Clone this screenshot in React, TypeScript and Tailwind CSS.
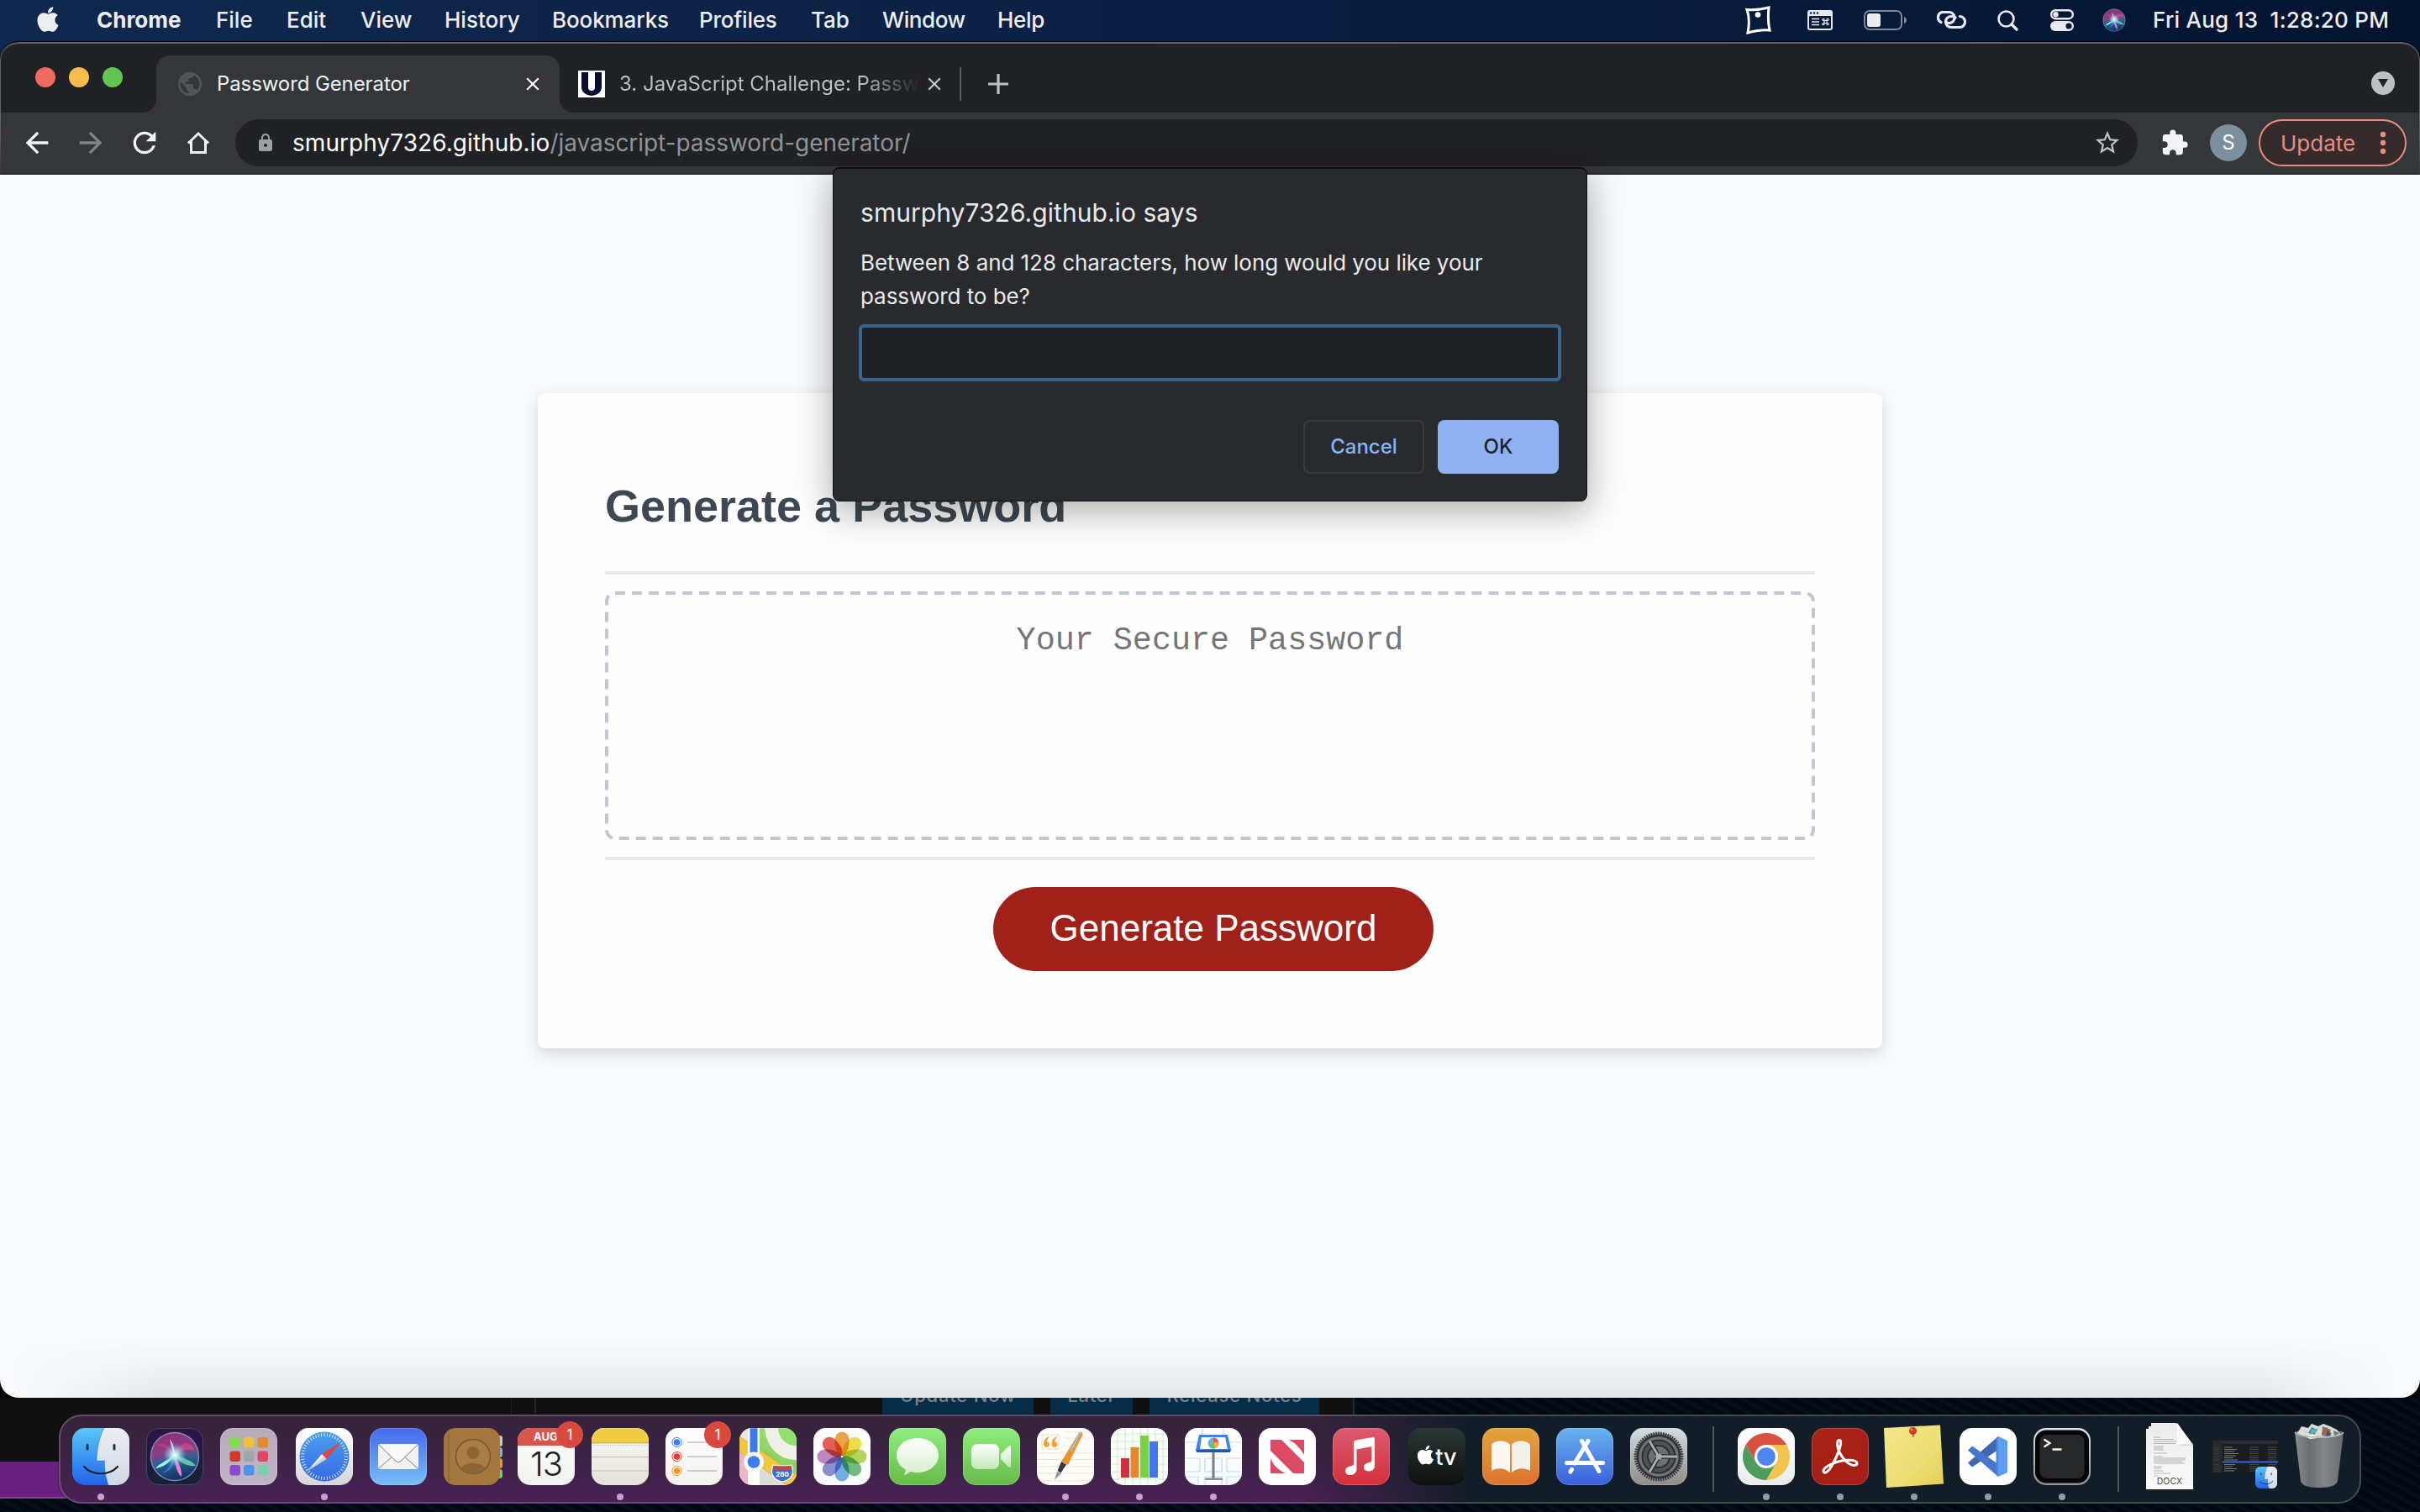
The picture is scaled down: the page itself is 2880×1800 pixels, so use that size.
import React from "react";
import { FaApple } from "react-icons/fa";
import { MdArrowBack, MdArrowForward, MdClose, MdExtension, MdLock, MdPublic, MdRefresh, MdStarBorder } from "react-icons/md";

/* ---------- menu bar ---------- */

const menus = [
  { label: "Chrome", cls: "w-[142px] font-bold tracking-[0px]" },
  { label: "File", cls: "w-[84px]" },
  { label: "Edit", cls: "w-[88px]" },
  { label: "View", cls: "w-[100px]" },
  { label: "History", cls: "w-[128px]" },
  { label: "Bookmarks", cls: "w-[175px] tracking-[-0.1px]" },
  { label: "Profiles", cls: "w-[133px] tracking-[-0.2px]" },
  { label: "Tab", cls: "w-[85px]" },
  { label: "Window", cls: "w-[137px] tracking-[-0.4px]" },
  { label: "Help", cls: "w-[80px] tracking-[-0.3px]" },
];

function SiriOrb({ id, size }: { id: string; size: number }) {
  return (
    <svg width={size} height={size} viewBox="0 0 60 60">
      <defs>
        <linearGradient id={id} x1="0.3" y1="0" x2="0.5" y2="1">
          <stop offset="0" stopColor="#8a2f78" />
          <stop offset="0.4" stopColor="#8d3f86" />
          <stop offset="0.6" stopColor="#2f5f93" />
          <stop offset="1" stopColor="#123060" />
        </linearGradient>
        <radialGradient id={id + "g"}>
          <stop offset="0" stopColor="#fff" />
          <stop offset="0.35" stopColor="#b6f5f4" stopOpacity="0.8" />
          <stop offset="1" stopColor="#58c6dc" stopOpacity="0" />
        </radialGradient>
      </defs>
      <circle cx="30" cy="30" r="28.5" fill={`url(#${id})`} stroke="#9fb6c9" strokeOpacity="0.7" strokeWidth="1.4" />
      <path d="M30 28C20 14 12 12 8 18c8-2 14 3 22 10z" fill="#d3347a" opacity="0.8" />
      <path d="M30 28C36 10 50 10 54 24c-8-5-16-2-24 4z" fill="#e04a86" opacity="0.6" />
      <path d="M30 28c-8 6-18 10-23 16 8-1 17-6 23-16z" fill="#8ffcf3" />
      <path d="M30 28c10 4 20 6 25 13-9 1-20-3-25-13z" fill="#6fdcb0" opacity="0.8" />
      <path d="M30 28c4 8 9 18 8 26-5-4-9-16-8-26z" fill="#ef7fd0" />
      <path d="M30 28c0-7-2-14-6-19 2 8 2 14 6 19z" fill="#f0b6e6" />
      <path d="M30 28c-3 9-8 17-15 22 10-2 16-10 15-22z" fill="#3f7fd8" opacity="0.8" />
      <circle cx="30" cy="28" r="14" fill={`url(#${id}g)`} />
    </svg>
  );
}

function StatusIcons() {
  return (
    <>
      <svg className="ml-[17px]" width="32" height="34" viewBox="0 0 32 34" fill="none">
        <path d="M2 4.500C10 5 20 4 28 2C27 11 27 20 29 29C20 28 11 30 3 32C5 22 5 13 2 4.500Z" stroke="#fff" strokeWidth="3" />
        <circle cx="15" cy="10.500" r="3.300" fill="#fff" />
      </svg>
      <svg className="ml-[42px]" width="30" height="24" viewBox="0 0 30 24">
        <rect x="0" y="0" width="30" height="24" rx="3" fill="#e7e9ee" />
        <g fill="#061a38">
          <circle cx="4" cy="3.500" r="1.200" />
          <circle cx="8" cy="3.500" r="1.200" />
          <circle cx="12" cy="3.500" r="1.200" />
          <rect x="2" y="7" width="26" height="15" rx="1" />
        </g>
        <path d="M5 10.500h9M5 14h9M5 17.500h9" stroke="#e7e9ee" strokeWidth="1.600" />
        <path d="M20 12.500h3v3h-3zM20 12.500h-1.200a1.100 1.100 0 1 1 1.200-1.200zM23 12.500v-1.200a1.100 1.100 0 1 1 1.200 1.200zM20 15.500v1.200a1.100 1.100 0 1 1-1.200-1.200zM23 15.500h1.200a1.100 1.100 0 1 1-1.200 1.200z" fill="none" stroke="#e7e9ee" strokeWidth="1.200" />
      </svg>
      <svg className="ml-[37px]" width="52" height="24" viewBox="0 0 52 24">
        <rect x="1" y="1" width="44" height="22" rx="6" fill="none" stroke="#7d8799" strokeWidth="2" />
        <rect x="4" y="4" width="16" height="16" rx="3" fill="#e9ebef" />
        <path d="M48 8c4 1.500 4 6.500 0 8z" fill="#7d8799" />
      </svg>
      <svg className="ml-[33px]" width="37" height="24" viewBox="0 0 37 24" fill="none" stroke="#e7e9ee" strokeWidth="3.200" strokeLinecap="round">
        <path d="M7 14.500A6.500 6.500 0 0 1 8 2.500h8.500a6.500 6.500 0 0 1 0 13c-2 0-3-.5-4-1.500" />
        <path d="M29.500 7.500a6.500 6.500 0 0 1-1 13H19a6.500 6.500 0 0 1 0-13c3 0 4 .5 5 1.500" />
      </svg>
      <svg className="ml-[37px]" width="25" height="25" viewBox="0 0 25 25" fill="none" stroke="#e7e9ee" strokeLinecap="round">
        <circle cx="10.500" cy="10.500" r="9" strokeWidth="2.600" />
        <path d="M17 17l6 6" strokeWidth="3.400" />
      </svg>
      <svg className="ml-[38px]" width="28" height="26" viewBox="0 0 28 26">
        <rect x="1.200" y="1.200" width="25.600" height="10" rx="5" fill="none" stroke="#e7e9ee" strokeWidth="2.400" />
        <circle cx="6.500" cy="6.200" r="3.200" fill="#e7e9ee" />
        <rect x="0" y="14" width="28" height="12" rx="6" fill="#e7e9ee" />
        <circle cx="22" cy="20" r="3.600" fill="#061a38" />
      </svg>
      <div className="ml-[34px]">
        <SiriOrb id="siriSmall" size={28} />
      </div>
    </>
  );
}

function MenuBar() {
  return (
    <div className="flex h-[49px] items-center bg-linear-to-r from-[#10284e] via-[#0a1f42] to-[#03142f] text-[26px] font-medium text-[#eceef2]">
      <FaApple className="-mt-1 ml-[42px] mr-[43px] h-[34px] w-[30px] text-[#eceef2]" />
      {menus.map((m) => (
        <div key={m.label} className={"-mt-[3px] whitespace-nowrap " + m.cls}>
          {m.label}
        </div>
      ))}
      <div className="ml-auto flex w-[820px] items-center pb-px">
        <StatusIcons />
        <div className="-mt-[2px] ml-[32px] whitespace-pre font-medium tracking-[0.25px]">Fri Aug 13  1:28:20 PM</div>
      </div>
    </div>
  );
}

/* ---------- browser chrome ---------- */

function TabStrip() {
  return (
    <div className="flex h-[84px] bg-[#202124]">
      <div className="ml-[42px] mt-[30px] flex gap-[16px]">
        <div className="size-6 rounded-full bg-[#ee6a5f]" />
        <div className="size-6 rounded-full bg-[#f5bd4f]" />
        <div className="size-6 rounded-full bg-[#61c454]" />
      </div>
      <svg className="ml-[24px] mt-[68px]" width="16" height="16" viewBox="0 0 16 16">
        <path d="M0 16A16 16 0 0 0 16 0V16Z" fill="#35363a" />
      </svg>
      <div className="mt-[16px] flex h-[68px] w-[480px] items-center rounded-t-[16px] bg-[#35363a] pl-[23px]">
        <MdPublic className="size-[34px] text-[#505357]" />
        <div className="ml-[15px] whitespace-nowrap text-[24px] tracking-[-0.1px] text-[#f1f3f4]">Password Generator</div>
        <MdClose className="ml-auto mr-[19px] size-[26px] text-white" />
      </div>
      <svg className="mt-[68px]" width="16" height="16" viewBox="0 0 16 16">
        <path d="M16 16A16 16 0 0 1 0 0V16Z" fill="#35363a" />
      </svg>
      <div className="mt-[16px] flex h-[68px] items-center">
        <div className="ml-[6px] flex h-8 w-8 justify-center bg-white">
          <svg width="32" height="32" viewBox="0 0 32 32">
            <path d="M4 2h8v18a4 4 0 0 0 8 0V2h8v18a12 10 0 0 1-24 0z" fill="#0b0f2e" />
          </svg>
        </div>
        <div className="relative ml-[17px] w-[350px] whitespace-nowrap text-[24px] text-[#bdc1c6]">
          <span className="bg-[linear-gradient(90deg,#bdc1c6_290px,#2a2b2e_350px)] bg-clip-text text-transparent">3. JavaScript Challenge: Passw</span>
        </div>
        <MdClose className="ml-[12px] size-[26px] text-[#c4c7cb]" />
        <div className="ml-[17px] h-10 w-[2px] bg-[#5b5d61]" />
        <svg className="ml-[32px]" width="24" height="24" viewBox="0 0 24 24">
          <path d="M12 0v24M0 12h24" stroke="#bdc1c6" strokeWidth="3.200" />
        </svg>
      </div>
      <div className="ml-auto mr-[30px] mt-[35px] flex size-7 items-center justify-center rounded-full bg-[#bdc1c6]">
        <svg width="12" height="10" viewBox="0 0 12 10">
          <path d="M0 0h12L6 10z" fill="#202124" />
        </svg>
      </div>
    </div>
  );
}

function Toolbar() {
  return (
    <div className="flex h-[74px] items-center border-b-2 border-[#292a2d] bg-[#35363a]">
      <MdArrowBack className="ml-[24px] size-[40px] text-[#f1f3f4]" />
      <MdArrowForward className="ml-[24px] size-[40px] text-[#808387]" />
      <MdRefresh className="ml-[24px] size-[40px] text-[#f1f3f4]" />
      <svg className="ml-[30px]" width="28" height="28" viewBox="0 0 28 28" fill="none" stroke="#f1f3f4" strokeWidth="3">
        <path d="M2 14.500L14 3l12 11.500M5.500 12v13.500h17V12" />
      </svg>
      <div className="ml-[30px] flex h-[56px] w-[2264px] items-center rounded-full bg-[#202124]">
        <MdLock className="ml-[24px] size-[24px] text-[#9aa0a6]" />
        <div className="ml-[20px] whitespace-nowrap text-[28px] tracking-[-0.05px] text-[#8f9499]">
          <span className="tracking-[0.06px] text-white">smurphy7326.github.io</span>/javascript-password-generator/
        </div>
        <MdStarBorder className="ml-auto mr-[19px] size-[34px] text-[#bdc1c6]" />
      </div>
      <MdExtension className="ml-[27px] size-[34px] text-[#f1f3f4]" />
      <div className="ml-[25px] flex size-11 items-center justify-center rounded-full bg-[#7b909c] text-[24px] text-white">S</div>
      <div className="ml-[14px] flex h-[56px] w-[176px] items-center rounded-full border-2 border-[#ea8c80] bg-[#352b2d] pl-[24px]">
        <div className="text-[26px] text-[#ea8c80]">Update</div>
        <svg className="ml-auto mr-[22px]" width="8" height="28" viewBox="0 0 8 28" fill="#ea8c80">
          <circle cx="4" cy="4" r="3.200" />
          <circle cx="4" cy="14" r="3.200" />
          <circle cx="4" cy="24" r="3.200" />
        </svg>
      </div>
    </div>
  );
}

function Dialog() {
  return (
    <div className="absolute left-[991px] top-[150px] flex h-[398px] w-[898px] flex-col rounded-[8px] border border-t-2 border-[#0e0f10] bg-[#292a2d] px-[32px] text-[#e8eaed] shadow-[0_10px_44px_2px_rgba(0,0,0,0.32)]">
      <div className="mt-[32px] whitespace-nowrap text-[30px] leading-[40px] tracking-[0.05px]">smurphy7326.github.io says</div>
      <div className="mt-[20px] w-[800px] text-[26px] leading-[40px] tracking-[-0.06px]">
        Between 8 and 128 characters, how long would you like your
        <br />
        password to be?
      </div>
      <div className="mt-[13px] -ml-[2px] h-[68px] w-[836px] shrink-0 rounded-[6px] border-[4px] border-[#3a648a] bg-[#202124]" />
      <div className="mt-[46px] flex justify-end gap-4 pr-px text-[24px] font-medium">
        <div className="flex h-[64px] w-[144px] items-center justify-center rounded-[8px] border-2 border-[#3a3b3f] text-[#8ab4f8]">Cancel</div>
        <div className="flex h-[64px] w-[144px] items-center justify-center rounded-[8px] bg-[#90b2f3] text-[#202124]">OK</div>
      </div>
    </div>
  );
}

function Page() {
  return (
    <div className="relative flex flex-1 justify-center bg-[#fafbfd] pt-[260px] font-['Liberation_Sans',Arial,sans-serif]">
      <div className="flex h-[780px] w-[1600px] flex-col items-center rounded-[8px] bg-[#fefefe] px-20 shadow-[0_6px_18px_rgba(30,40,50,0.18)]">
        <h2 className="mt-[103px] w-full text-[54px] font-bold leading-[62px] text-[#3d4852]">Generate a Password</h2>
        <div className="mt-[47px] h-1 w-full bg-[#e7e9eb]" />
        <div className="relative mt-5 h-[296px] w-full pt-[37px] text-center font-['Liberation_Mono','Courier_New',monospace] text-[38.4px] leading-[44px] text-[#757575]">
          Your Secure Password
          <svg className="absolute inset-0" width="1440" height="296" viewBox="0 0 1440 296">
            <rect x="2" y="2" width="1436" height="292" rx="10" fill="none" stroke="#c1c7d0" strokeWidth="4" strokeDasharray="12 7.99" />
          </svg>
        </div>
        <div className="mt-5 h-1 w-full bg-[#e7e9eb]" />
        <div className="ml-2 mt-8 flex h-[100px] w-[524px] items-center justify-center rounded-full bg-[#a02119] pb-[2px] text-[44px] text-white">
          Generate Password
        </div>
      </div>
      <div className="absolute inset-x-0 bottom-0 h-[70px] bg-linear-to-b from-transparent to-black/8 [mask-image:linear-gradient(to_right,transparent_10px,black_190px,black_2690px,transparent_2850px)]" />
    </div>
  );
}

/* ---------- dock icons, each drawn on a 68 x 68 tile ---------- */

function Grad({ id, from, to }: { id: string; from: string; to: string }) {
  return (
    <linearGradient id={id} x1="0" y1="0" x2="0" y2="1">
      <stop offset="0" stopColor={from} />
      <stop offset="1" stopColor={to} />
    </linearGradient>
  );
}

function FinderFace({ id, size }: { id: string; size: number }) {
  return (
    <svg width={size} height={size} viewBox="0 0 68 68">
      <defs>
        <Grad id={id + "a"} from="#59c8f8" to="#2163ea" />
        <Grad id={id + "b"} from="#eceef2" to="#cfd9e6" />
        <clipPath id={id + "c"}>
          <rect width="68" height="68" rx="15" />
        </clipPath>
      </defs>
      <g clipPath={`url(#${id}c)`}>
        <rect width="68" height="68" fill={`url(#${id}a)`} />
        <path d="M38 0C32 12 29.500 24 29 39h9.500c-.2 10 1 20 4.500 29H68V0z" fill={`url(#${id}b)`} />
        <path d="M38 0C32 12 29.500 24 29 39h9.500c-.2 10 1 20 4.500 29" fill="none" stroke="#2a5c98" strokeOpacity="0.35" strokeWidth="1" />
        <path d="M18 20.500v4.500M50 20.500v4.500" stroke="#1f2f45" strokeWidth="3" strokeLinecap="round" />
        <path d="M14 46c10 11 30 11 40 0" fill="none" stroke="#15202e" strokeWidth="2.200" strokeLinecap="round" />
      </g>
    </svg>
  );
}

function Tile({ id, from, to, children }: { id: string; from: string; to: string; children?: React.ReactNode }) {
  return (
    <svg width="68" height="68" viewBox="0 0 68 68">
      <defs>
        <Grad id={id + "-bg"} from={from} to={to} />
        <clipPath id={id + "-clip"}>
          <rect width="68" height="68" rx="15" />
        </clipPath>
      </defs>
      <g clipPath={`url(#${id}-clip)`}>
        <rect width="68" height="68" fill={`url(#${id}-bg)`} />
        {children}
      </g>
      <rect x="0.500" y="0.500" width="67" height="67" rx="14.500" fill="none" stroke="#fff" strokeOpacity="0.18" />
    </svg>
  );
}

const launchColors = ["#7ddf4c", "#eec23c", "#e58a33", "#cf3a2c", "#9fa5ab", "#df4764", "#8f48d0", "#4a94f0", "#7ccfa8"];
const petals = ["#e8962e", "#efd92f", "#a9cf45", "#5fb070", "#5aa5e0", "#7a80c6", "#b873b8", "#e0453a"];
const petalAngles = [0, 45, 90, 135, 180, 225, 270, 315];
const ticks = Array.from({ length: 48 }, (_, i) => i * 7.5);
const teeth = Array.from({ length: 60 }, (_, i) => i * 6);

function Siri() {
  return (
    <Tile id="siri" from="#2c1347" to="#152238">
      <g transform="translate(4 4)">
        <SiriOrb id="siriLarge" size={60} />
      </g>
    </Tile>
  );
}

function Launchpad() {
  return (
    <Tile id="launch" from="#b5acba" to="#c2b4c8">
      {launchColors.map((c, i) => (
        <rect key={c} x={11.500 + (i % 3) * 16.500} y={11 + Math.floor(i / 3) * 16.500} width="12.500" height="12.500" rx="3" fill={c} />
      ))}
    </Tile>
  );
}

function Safari() {
  return (
    <Tile id="safari" from="#ffffff" to="#d6d6d8">
      <defs>
        <Grad id="safariBlue" from="#4aa0ee" to="#3669e4" />
      </defs>
      <circle cx="34" cy="34" r="29.500" fill="url(#safariBlue)" />
      {ticks.map((a) => (
        <path key={a} d="M34 6v4" stroke="#fff" strokeOpacity="0.8" strokeWidth="1" transform={`rotate(${a} 34 34)`} />
      ))}
      <path d="M55 16L36.500 37 31 31z" fill="#e2453a" />
      <path d="M14 51L36.500 37 31 31z" fill="#f3f4f6" />
      <path d="M14 51L36.500 37 34 34z" fill="#c9ccd2" />
    </Tile>
  );
}

function Mail() {
  return (
    <Tile id="mail" from="#4668ea" to="#78bff6">
      <rect x="10" y="19" width="48" height="30" rx="3" fill="#f2f2f3" />
      <path d="M11 48L28 33M57 48L40 33" stroke="#a9abb0" strokeWidth="1.200" />
      <path d="M11 20l19 18.500c2.500 2.500 5.500 2.500 8 0L57 20" fill="#fafafa" stroke="#a9abb0" strokeWidth="1.200" />
    </Tile>
  );
}

function Contacts() {
  return (
    <svg width="72" height="68" viewBox="0 0 72 68" className="ml-[3px]">
      <rect x="60" y="9" width="10" height="13" rx="3" fill="#c9cacb" />
      <rect x="60" y="23" width="10" height="12" rx="3" fill="#6cb6ea" />
      <rect x="60" y="36" width="10" height="12" rx="3" fill="#ea9136" />
      <rect x="60" y="49" width="10" height="11" rx="3" fill="#71cf68" />
      <rect x="0" y="0" width="67" height="68" rx="14" fill="#a3773f" />
      <path d="M6 4v60" stroke="#7f5a2c" strokeWidth="1" opacity="0.7" />
      <circle cx="35" cy="34" r="20.500" fill="#a87d46" stroke="#7b572b" strokeWidth="1.500" />
      <circle cx="35" cy="29.500" r="7.500" fill="#8c6636" />
      <path d="M20.500 48C25 39.500 45 39.500 49.500 48 42 56.500 28 56.500 20.500 48z" fill="#8c6636" />
    </svg>
  );
}

function Calendar() {
  return (
    <div className="flex h-[68px] w-[68px] flex-col items-center overflow-hidden rounded-[15px] bg-linear-to-b from-white to-[#f1f1ef]">
      <div className="flex h-[21px] w-full items-center bg-[#d8564b] pl-[19px] text-[13px] font-bold text-white">AUG</div>
      <div className="text-[40px] font-light leading-[44px] tracking-[-1px] text-[#1e1e1e]">13</div>
    </div>
  );
}

function Notes() {
  return (
    <Tile id="notes" from="#fafaf8" to="#e4e2da">
      <rect width="68" height="17.500" fill="#f0cd45" />
      <rect y="17" width="68" height="1.500" fill="#b99a2a" opacity="0.6" />
      <path d="M2 20.500h64" stroke="#b9b7b0" strokeWidth="1" strokeDasharray="1 1.500" />
      <path d="M0 34.500h68M0 51h68" stroke="#cfcdc6" strokeWidth="1.500" />
    </Tile>
  );
}

function Reminders() {
  return (
    <Tile id="remind" from="#ffffff" to="#f2f1ee">
      {["#3f7cf0", "#dc3d31", "#ec952c"].map((c, i) => (
        <g key={c}>
          <circle cx="13.500" cy={17 + i * 17} r="3.800" fill={c} />
          <circle cx="13.500" cy={17 + i * 17} r="5.600" fill="none" stroke={c} strokeWidth="1" />
          <path d={`M26 ${17 + i * 17}h35`} stroke="#bfc0c2" strokeWidth="1.500" />
        </g>
      ))}
    </Tile>
  );
}

function Maps() {
  return (
    <Tile id="maps" from="#9ada6e" to="#86cf5c">
      <path d="M0 0h10v68H0z" fill="#e9e7df" />
      <path d="M0 28l14 12v28H0z" fill="#efb3c2" />
      <path d="M24 34l44 34H24z" fill="#dfddd3" />
      <path d="M24 20l44 32v10L24 34z" fill="#8dd363" />
      <path d="M0 10l68 46v12H56L0 28z" fill="#f3c93e" stroke="#dba42b" strokeWidth="0.800" />
      <path d="M30 0c2 22 16 38 38 38V21C55 21 47 12 46 0z" fill="#f1efea" />
      <path d="M46 0c1 12 9 21 22 21V0z" fill="#94e06c" />
      <path d="M10 0h14v68H10z" fill="#fff" />
      <path d="M12.500 0h9v40h-9z" fill="#3d7bea" />
      <circle cx="17" cy="40.500" r="12" fill="#f7f8fa" />
      <circle cx="17" cy="40.500" r="7.300" fill="#3f7bea" />
      <path d="M40 44c4 1 18 1 22 0 2 6 2 10 0 13-2 4-6 6-11 7-5-1-9-3-11-7-2-3-2-7 0-13z" fill="#3a6fd0" stroke="#fff" strokeWidth="1.200" />
      <path d="M41 45c4 1 16 1 20 0l1 4.500H40z" fill="#d6402f" />
      <text x="51" y="57.500" textAnchor="middle" fontSize="8" fontWeight="700" fill="#fff" className="font-['Inter',sans-serif]">280</text>
    </Tile>
  );
}

function Photos() {
  return (
    <Tile id="photos" from="#ffffff" to="#fafafa">
      {petals.map((c, i) => (
        <path key={c} d="M34 34C27 29 25.500 24 25.500 13.500a8.500 9 0 0 1 17 0C42.500 24 41 29 34 34z" fill={c} fillOpacity="0.86" transform={`rotate(${petalAngles[i]} 34 34)`} className="mix-blend-multiply" />
      ))}
      <circle cx="34" cy="34" r="1.300" fill="#fff" />
    </Tile>
  );
}

function Messages() {
  return (
    <Tile id="messages" from="#8fee7e" to="#68ba49">
      <defs>
        <Grad id="bubble" from="#ffffff" to="#d5efcd" />
      </defs>
      <path d="M34 12c14 0 25 9 25 20.500S48 53 34 53c-3 0-6-.4-8.500-1.200C23 54 21 55.500 17.500 56c1.500-1.700 2.300-4 2.200-6.500C13 46 9 39.500 9 32.500 9 21 20 12 34 12z" fill="url(#bubble)" />
    </Tile>
  );
}

function FaceTime() {
  return (
    <Tile id="facetime" from="#8fee7e" to="#68ba49">
      <defs>
        <Grad id="cam" from="#ffffff" to="#c3e9b8" />
      </defs>
      <rect x="10" y="19" width="33" height="30" rx="7" fill="url(#cam)" />
      <path d="M45 31l9.500-9.500c1-1 2.500-.5 2.500 1v23c0 1.500-1.500 2-2.500 1L45 37z" fill="url(#cam)" />
    </Tile>
  );
}

function Pages() {
  return (
    <Tile id="pages" from="#ffffff" to="#fdfcfa">
      <path d="M33 5h35M33 12h35M0 30h68M0 37.500h68M0 46h68M0 54h68M0 63h68" stroke="#f8dfbd" strokeWidth="1" />
      <rect x="6" y="8" width="20" height="17" fill="none" stroke="#f6d7ac" strokeWidth="1" />
      <path d="M14.500 10c-4 1.500-6.500 4.500-6.500 8.500 0 3 1.500 4.500 3.500 4.500s3.500-1.300 3.500-3.200c0-2-1.300-3.200-3.200-3.200 0-2 1-4 3-5.600zM24 10c-4 1.500-6.500 4.500-6.500 8.500 0 3 1.500 4.500 3.500 4.500s3.500-1.300 3.500-3.200c0-2-1.300-3.200-3.200-3.200 0-2 1-4 3-5.600z" fill="#eda63f" />
      <path d="M50 5.500c1.500-1.500 5 0 4.500 2.500L37 44l-8-4z" fill="#ea962e" />
      <path d="M50 5.500L39.500 27l2 1L52 6z" fill="#9cc4e4" />
      <path d="M29 40l6 3.500-6.500 10-4-2.500z" fill="#3a3a3d" />
      <path d="M24 52l5 2-8 8z" fill="#8e949b" />
    </Tile>
  );
}

function Numbers() {
  return (
    <Tile id="numbers" from="#ffffff" to="#fbfdfb">
      <path d="M8 0v68M17 0v68M26 0v68M35 0v68M44 0v68M53 0v68M62 0v68M0 7h68M0 16h68M0 25h68M0 34h68M0 43h68M0 52h68M0 61h68" stroke="#c9eec6" strokeWidth="1" />
      <rect x="12" y="36" width="10" height="23" fill="#cf3040" />
      <rect x="23.500" y="23" width="10" height="36" fill="#e2892d" />
      <rect x="35" y="9" width="10" height="50" fill="#78d23f" />
      <rect x="46" y="16" width="10" height="43" fill="#4475ec" />
    </Tile>
  );
}

function Keynote() {
  return (
    <Tile id="keynote" from="#ffffff" to="#f8fbfe">
      <path d="M0 17h18M50 17h18M0 36h16q2 0 2 2v12q0 2-2 2H0M24 36h20v16H24zM68 36H52q-2 0-2 2v12q0 2 2 2h16M21 0v8M46 0v8M0 58h16v10M24 68V58h20v10M50 68V58h18" fill="none" stroke="#bfdcf3" strokeWidth="1.200" />
      <path d="M32.500 28h3v33h-3z" fill="#77808a" />
      <path d="M24 59.500h21v2.500H24z" fill="#8a8f95" />
      <path d="M17 8h34l4 18-2 3H15l-2-3z" fill="#3a86ea" />
      <path d="M20 11h28l3 14H18z" fill="#fff" />
      <path d="M13 26h42l-1.500 3h-39z" fill="#2354a8" />
      <circle cx="34" cy="18" r="6.500" fill="#60b7ea" />
      <path d="M34 18V11.500a6.500 6.500 0 0 1 6.300 5z" fill="#ea5a48" />
      <path d="M34 18l6.400-1.400a6.500 6.500 0 0 1-4 7.500z" fill="#f0b338" />
      <path d="M34 18l2.400 6a6.500 6.500 0 0 1-8.300-3.500z" fill="#6cc35b" />
    </Tile>
  );
}

function News() {
  return (
    <Tile id="news" from="#ffffff" to="#ffffff">
      <path d="M14 14h13l27 27v13H41L14 27z" fill="#dc4a62" />
      <path d="M36 14h18v18C50 25 44 18 36 14z" fill="#dc4a62" />
      <path d="M14 36c3 8 9 14 18 18H14z" fill="#dc4a62" />
    </Tile>
  );
}

function Music() {
  return (
    <Tile id="music" from="#de5a70" to="#d2303a">
      <path d="M25 18c0-2 1-3 3-3.400L47 11c2-.4 3 .3 3 2v32c0 4-3 6.500-7 6.500-3.500 0-6-1.700-6-4.700 0-3 2.200-5 5.500-5.500 3-.5 4-1.300 4-3.300V22L28.500 25.500V49c0 4-3 7-7.500 7-3.500 0-6-2-6-5 0-3 2.500-5 6-5.600 3-.5 4-1.400 4-3.400z" fill="#fff" />
    </Tile>
  );
}

function AppleTv() {
  return (
    <div className="flex h-[68px] w-[68px] items-center justify-center rounded-[15px] bg-linear-to-b from-[#2a3733] to-[#0d1211] text-white">
      <FaApple className="-mt-1 h-[26px] w-[21px]" />
      <div className="ml-[1px] text-[27px] font-medium leading-[27px]">tv</div>
    </div>
  );
}

function Books() {
  return (
    <Tile id="books" from="#e4a43b" to="#dc7430">
      <path d="M33 20c-4-6-18-6-22 0v31c6-4 16-4 22 2z" fill="#fbf8f4" />
      <path d="M35 20c4-6 18-6 22 0v31c-6-4-16-4-22 2z" fill="#f5f0ea" />
    </Tile>
  );
}

function AppStore() {
  return (
    <Tile id="store" from="#69b5f0" to="#3a5fdb">
      <g stroke="#fff" strokeWidth="5" strokeLinecap="round">
        <path d="M38 15.500L22 42" />
        <path d="M30.500 15.500L51 51.500" />
        <path d="M12.500 41.500h43" />
        <path d="M18.500 49.500l-1.500 2.500" />
      </g>
    </Tile>
  );
}

function Settings() {
  return (
    <Tile id="settings" from="#d3dde4" to="#8f8c88">
      <circle cx="34" cy="34" r="28.500" fill="#8b8f93" />
      {teeth.map((a) => (
        <path key={a} d="M34 4.500v4" stroke="#2e3033" strokeWidth="1.500" transform={`rotate(${a} 34 34)`} />
      ))}
      <circle cx="34" cy="34" r="25" fill="#707479" stroke="#2e3033" strokeWidth="2.400" />
      <circle cx="34" cy="34" r="19.500" fill="#4f5256" stroke="#2c2e31" strokeWidth="2" />
      <circle cx="34" cy="34" r="13" fill="#6c7074" stroke="#2c2e31" strokeWidth="2" />
      <path d="M34 34h21M34 34L23.500 16M34 34L23.500 52" stroke="#2c2e31" strokeWidth="5.500" />
      <path d="M34 34h22M34 34L23 15.500M34 34L23 52.500" stroke="#a9adb1" strokeWidth="2.800" />
      <circle cx="34" cy="34" r="3.500" fill="#a9adb1" />
    </Tile>
  );
}

function ChromeIcon() {
  return (
    <Tile id="chrome" from="#ffffff" to="#ebebed">
      <path d="M34 20h24.250A28 28 0 0 1 34 62L46 41z" fill="#f0c44f" />
      <path d="M9.750 20A28 28 0 0 0 34 62l12-21-24 0z" fill="#4d9c5b" />
      <path d="M34 20h24.250A28 28 0 0 0 9.750 20L22 41z" fill="#d8513f" />
      <circle cx="34" cy="34" r="14" fill="#fff" />
      <circle cx="34" cy="34" r="10.800" fill="#4f86ee" />
    </Tile>
  );
}

function Acrobat() {
  return (
    <Tile id="acrobat" from="#a92217" to="#a31e14">
      <path d="M33 14.500c-3 0-2.800 5-1.500 10 1.800 7 8 15 14 18.500 5 2.500 9 1.500 8.500-1.200-.5-2.800-5-3.800-11-3.600-7.500.3-16 2.800-22.500 6.300-5.500 3-7.500 6-6 8 1.700 2 5.500-.5 9.500-7.500 4-7 8-16 9.800-22.500 1.400-5 1.200-8-.8-8z" fill="none" stroke="#fff" strokeWidth="3" />
    </Tile>
  );
}

function Stickies() {
  return (
    <svg width="72" height="76" viewBox="0 0 72 76">
      <defs>
        <linearGradient id="sticky" x1="0" y1="0" x2="1" y2="1">
          <stop offset="0" stopColor="#f3e78a" />
          <stop offset="0.600" stopColor="#eedf74" />
          <stop offset="1" stopColor="#e2cd57" />
        </linearGradient>
      </defs>
      <path d="M0 4L67 0.500 71 70.500 3 75z" fill="url(#sticky)" />
      <path d="M34.500 10l0.500 5" stroke="#a8622c" strokeWidth="1.500" />
      <circle cx="34.500" cy="7.500" r="4.500" fill="#cc3a2b" />
      <circle cx="33" cy="6" r="1.500" fill="#f0897d" />
    </svg>
  );
}

function VSCode() {
  return (
    <Tile id="vscode" from="#ffffff" to="#fefefe">
      <path d="M46 10L57 15v38l-11 5z" fill="#5f9df0" />
      <path d="M46 10L10 41.500l5 5L46 26z" fill="#3f67ac" />
      <path d="M46 58L10 26.500l5-5L46 43z" fill="#4775cb" />
      <path d="M46 10v48l-2.500-2V12z" fill="#4f86de" />
    </Tile>
  );
}

function Terminal() {
  return (
    <Tile id="terminal" from="#cfe3f2" to="#85878a">
      <rect x="2" y="2.500" width="64" height="63" rx="13" fill="#050505" />
      <rect x="7.500" y="8" width="53" height="52" rx="8" fill="#262729" />
      <path d="M12.500 13.500l7 4.500-7 4.500" fill="none" stroke="#fff" strokeWidth="2.200" />
      <path d="M22.500 25.500h11" stroke="#fff" strokeWidth="2.400" />
    </Tile>
  );
}

const docLines = [18, 20.5, 23, 25.5, 29, 31, 33, 37, 41, 43, 45, 47, 49, 53, 55, 58, 61, 64];
const docWidths = [8, 24, 27, 26, 12, 11, 12, 16, 10, 38, 38, 34, 37, 10, 9, 11, 20, 5];

function Docx() {
  return (
    <svg width="56" height="80" viewBox="0 0 56 80">
      <defs>
        <Grad id="doc" from="#ececec" to="#fafafa" />
      </defs>
      <path d="M6 1h30l20 26v53H0V8h3V5h3z" fill="url(#doc)" />
      <path d="M37 1v27h19z" fill="#d9d9d9" />
      <path d="M37 1l19 26c-7-1-13-1-19 1z" fill="#fbfbfb" />
      {docLines.map((y, i) => (
        <path key={y} d={`M9 ${y}h${docWidths[i]}`} stroke="#9b9b9b" strokeWidth="0.700" />
      ))}
      <text x="28" y="73.500" textAnchor="middle" fontSize="10.500" fill="#4b4b4b" className="font-['Inter',sans-serif]">DOCX</text>
    </svg>
  );
}

const thumbRows = [7, 9.5, 12, 14.5, 17, 19.5, 22, 27.5, 30, 32.5, 35];

function WindowThumb() {
  return (
    <div className="relative h-[60px] w-[80px]">
      <svg width="78" height="38" viewBox="0 0 78 38">
        <rect width="78" height="38" fill="#1b1c1e" />
        <rect width="12" height="38" fill="#28292b" />
        <rect x="12" width="66" height="4" fill="#2b2c2f" />
        {thumbRows.map((y, i) => (
          <g key={y}>
            <path d={`M14 ${y + 1}h${10 + ((i * 5) % 8)}`} stroke="#9b9da0" strokeWidth="0.700" />
            <path d={`M44 ${y + 1}h11M66 ${y + 1}h10`} stroke="#55575b" strokeWidth="0.700" />
            <path d={`M2 ${y + 1}h6`} stroke="#45474a" strokeWidth="0.600" />
          </g>
        ))}
        <rect x="12" y="24.500" width="66" height="2" fill="#3864e2" />
      </svg>
      <div className="absolute left-[51px] top-[31px]">
        <FinderFace id="finderMini" size={26} />
      </div>
    </div>
  );
}

function Trash() {
  return (
    <svg width="60" height="78" viewBox="0 0 60 78">
      <defs>
        <linearGradient id="can" x1="0" y1="0" x2="1" y2="0">
          <stop offset="0" stopColor="#8a8d90" />
          <stop offset="0.300" stopColor="#6c6f72" />
          <stop offset="0.600" stopColor="#84878a" />
          <stop offset="1" stopColor="#696c6f" />
        </linearGradient>
      </defs>
      <path d="M1 11c8-4 50-4 58 0l-7 58c-1 5-8 8-22 8S9 74 8 69z" fill="url(#can)" />
      <path d="M4 12L9 4l8 2 4-5 8 3 6-3 8 3 8 4 5 6c-8 5-44 5-52-2z" fill="#dcdcdc" />
      <path d="M9 8l8 4 4-7 7 3-4 7zM34 4l10 4-3 8-8-1zM47 9l7 3-6 4z" fill="#75787c" />
      <path d="M20 8l8-1-2 5-6 1z" fill="#55b8c0" />
      <path d="M33 12l6-7 6 8-5 4z" fill="#a8643c" />
      <path d="M40 8l4 7-6 1z" fill="#31538d" />
      <path d="M13 16l10-3 5 5-9 1z" fill="#fafafa" />
      <path d="M1 11c4 8 54 8 58 0" fill="none" stroke="#b4b7ba" strokeWidth="1.500" />
    </svg>
  );
}

function Badge() {
  return (
    <div className="absolute left-[46px] top-[-8px] flex size-8 items-center justify-center rounded-full bg-[#d8493d] text-[17px] leading-none text-white">1</div>
  );
}

type DockItem = { name: string; icon: React.ReactNode; dot?: boolean; badge?: boolean; gap?: boolean };

const apps: DockItem[] = [
  { name: "Finder", icon: <FinderFace id="finder" size={68} />, dot: true },
  { name: "Siri", icon: <Siri /> },
  { name: "Launchpad", icon: <Launchpad /> },
  { name: "Safari", icon: <Safari />, dot: true, gap: true },
  { name: "Mail", icon: <Mail /> },
  { name: "Contacts", icon: <Contacts /> },
  { name: "Calendar", icon: <Calendar />, badge: true },
  { name: "Notes", icon: <Notes />, dot: true },
  { name: "Reminders", icon: <Reminders />, badge: true },
  { name: "Maps", icon: <Maps /> },
  { name: "Photos", icon: <Photos /> },
  { name: "Messages", icon: <Messages />, gap: true },
  { name: "FaceTime", icon: <FaceTime /> },
  { name: "Pages", icon: <Pages />, dot: true },
  { name: "Numbers", icon: <Numbers />, dot: true },
  { name: "Keynote", icon: <Keynote />, dot: true },
  { name: "News", icon: <News /> },
  { name: "Music", icon: <Music /> },
  { name: "TV", icon: <AppleTv />, gap: true },
  { name: "Books", icon: <Books /> },
  { name: "App Store", icon: <AppStore /> },
  { name: "Settings", icon: <Settings /> },
];

const pinned: DockItem[] = [
  { name: "Chrome", icon: <ChromeIcon />, dot: true },
  { name: "Acrobat", icon: <Acrobat />, dot: true },
  { name: "Stickies", icon: <Stickies />, dot: true },
  { name: "VS Code", icon: <VSCode />, dot: true },
  { name: "Terminal", icon: <Terminal />, dot: true },
];

function DockSlot({ item, dotClass }: { item: DockItem; dotClass: string }) {
  return (
    <div className={"flex w-[88px] shrink-0 flex-col items-center pt-[14px] " + (item.gap ? "ml-[2px]" : "")}>
      <div className="relative flex h-[68px] items-center justify-center">
        {item.icon}
        {item.badge && <Badge />}
      </div>
      {item.dot && <div className={"mt-[10px] size-2 rounded-full " + dotClass} />}
    </div>
  );
}

function Dock() {
  return (
    <div className="relative mx-auto mt-[20px] flex h-[106px] w-[2740px] rounded-[27px] border-2 border-white/20 bg-[linear-gradient(90deg,transparent_1480px,#131d28_1680px),linear-gradient(180deg,#35233a_0%,#3b2343_45%,#4a2056_100%)] bg-origin-border pl-[4px] shadow-[0_0_2px_rgba(0,0,0,0.8)]">
      {apps.map((a) => (
        <DockSlot key={a.name} item={a} dotClass="bg-[#c59fd2]" />
      ))}
      <div className="ml-[20px] mr-[18px] mt-[6px] h-[78px] w-[2px] shrink-0 self-start bg-[#4b555e] translate-y-[6px]" />
      {pinned.map((a) => (
        <DockSlot key={a.name} item={a} dotClass="bg-[#8f9ba5]" />
      ))}
      <div className="ml-[22px] mt-[12px] h-[78px] w-[2px] shrink-0 bg-[#4b555e]" />
      <div className="ml-[32px] mt-[7px] shrink-0">
        <Docx />
      </div>
      <div className="ml-[23px] mt-[29px] shrink-0">
        <WindowThumb />
      </div>
      <div className="ml-[17px] mt-[8px] shrink-0">
        <Trash />
      </div>
    </div>
  );
}

/* ---------- desktop strip behind the dock ---------- */

function Desktop() {
  return (
    <div className="relative h-[136px] overflow-hidden bg-[repeating-linear-gradient(28deg,#020911_0px,#06121d_3px,#030a13_6px,#020810_11px)]">
      <div className="absolute left-0 top-0 h-[120px] w-[1612px] border-r-2 border-[#2a2a2a] bg-[#101010]">
        <div className="absolute bottom-0 left-0 h-[44px] w-[1400px] border-b-2 border-[#7d4790] bg-[#6a2080]" />
        <div className="absolute left-[608px] top-0 h-5 w-px bg-[#202020]" />
        <div className="absolute left-[636px] top-0 h-5 w-[2px] bg-[#242424]" />
        <div className="absolute left-[1050px] top-0 flex h-5 gap-5 text-[22px] font-medium leading-none tracking-[0.8px] text-[#7b8188]">
          <div className="flex w-[180px] justify-center overflow-hidden bg-[#062c47]"><span className="-mt-[14px]">Update Now</span></div>
          <div className="flex w-[98px] justify-center overflow-hidden bg-[#062c47]"><span className="-mt-[14px]">Later</span></div>
          <div className="flex w-[202px] justify-center overflow-hidden bg-[#062c47]"><span className="-mt-[14px]">Release Notes</span></div>
        </div>
      </div>
      <div className="relative flex">
        <Dock />
      </div>
    </div>
  );
}

export default function App() {
  return (
    <div className="flex h-[1800px] w-[2880px] flex-col overflow-hidden bg-[#03101f] font-['Inter',sans-serif]">
      <MenuBar />
      <div className="relative flex h-[1615px] shrink-0 bg-linear-to-r from-[#10284e] via-[#0a1f42] to-[#03142f]">
        <div className="absolute inset-x-0 bottom-0 h-10 bg-[#050505]" />
        <div className="relative flex flex-1 flex-col overflow-hidden rounded-[22px] border-t-[1px] border-black bg-[#202124]">
          <TabStrip />
          <Toolbar />
          <Page />
          <div className="absolute inset-x-0 top-0 h-[160px] rounded-t-[22px] border-x border-t-2 border-[#636467] [mask-image:linear-gradient(to_bottom,black_60%,transparent)]" />
        </div>
        <Dialog />
      </div>
      <Desktop />
    </div>
  );
}
